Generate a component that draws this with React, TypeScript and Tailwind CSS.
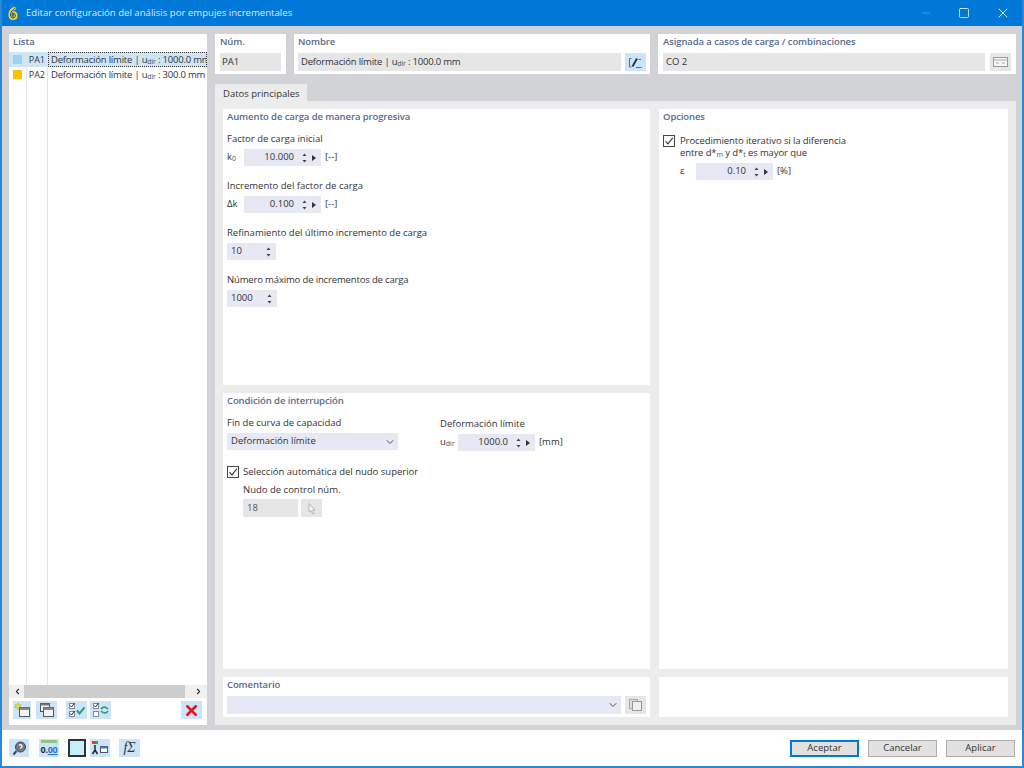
import React from 'react';
import { ChevronDown, ChevronLeft, ChevronRight, Minus, Square, X } from 'lucide-react';

const font = "font-['Open_Sans','Noto_Sans',sans-serif]";

function Sub({ children }: { children: React.ReactNode }) {
  return <span className="text-[7px] relative top-[1px] text-[#555]">{children}</span>;
}

function Heading({ children }: { children: React.ReactNode }) {
  return <div className="text-[9.5px] leading-[14px] font-semibold tracking-[-0.1px] text-[#5a6a8c]">{children}</div>;
}

function Label({ children, className = '' }: { children: React.ReactNode; className?: string }) {
  return <div className={`text-[9.5px] leading-[14px] text-[#333] ${className}`}>{children}</div>;
}

// up/down arrows of a spinner
function Spin() {
  return (
    <svg width="5" height="12" viewBox="0 0 5 12" className="shrink-0">
      <path d="M2.5 1.5L4.5 4H0.5z" fill="#444" />
      <path d="M2.5 10.5L4.5 8H0.5z" fill="#444" />
    </svg>
  );
}

function Play() {
  return (
    <svg width="4" height="6" viewBox="0 0 4 6" className="shrink-0">
      <path d="M0 0L4 3L0 6z" fill="#333" />
    </svg>
  );
}

function SpinField({ value, width, unit }: { value: string; width: string; unit: string }) {
  return (
    <>
      <div className={`h-[17px] ${width} bg-[#e6e8f3] flex items-center justify-end pr-[5px] gap-[5px] text-[9.5px] text-[#333]`}>
        <span className="mr-[3px]">{value}</span>
        <Spin />
        <Play />
      </div>
      <span className="text-[9.5px] text-[#333] ml-[4px]">{unit}</span>
    </>
  );
}

function IntField({ value, width }: { value: string; width: string }) {
  return (
    <div className={`h-[17px] ${width} bg-[#e6e8f3] flex items-center justify-between pl-[4px] pr-[5px] text-[9.5px] text-[#333] mt-[3px]`}>
      <span>{value}</span>
      <Spin />
    </div>
  );
}

function Check() {
  return (
    <div className="w-[12px] h-[12px] border border-[#444] bg-white flex items-center justify-center shrink-0">
      <svg width="10" height="10" viewBox="0 0 10 10">
        <path d="M1.5 5.2L4 7.8L8.8 1.8" fill="none" stroke="#333" strokeWidth="1.1" />
      </svg>
    </div>
  );
}

function ToolBtn({ children, className = 'w-[21px]' }: { children: React.ReactNode; className?: string }) {
  return <div className={`h-[18px] bg-[#cce4f7] flex items-center justify-center shrink-0 ${className}`}>{children}</div>;
}

function WinIcon({ star }: { star?: boolean }) {
  return (
    <svg width="17" height="16" viewBox="0 0 17 16">
      {star ? (
        <path d="M4 1l1 2 2-.5-1 2 1.5 1.500-2.500.2L4 8 3 5.700.5 5.500 2 4 1.200 2.500 3 3z" fill="#e8e020" stroke="#9a9a20" strokeWidth="0.4" />
      ) : (
        <>
          <rect x="2.500" y="1.500" width="9" height="8" fill="#f4f4f4" stroke="#555" />
          <rect x="2.500" y="1.500" width="9" height="2" fill="#777" />
        </>
      )}
      <rect x="5.500" y="5.500" width="10" height="9" fill="#f4f4f4" stroke="#555" />
      <rect x="5.500" y="5.500" width="10" height="2.500" fill="#888" />
    </svg>
  );
}

function CheckRows({ swap }: { swap?: boolean }) {
  return (
    <svg width="18" height="16" viewBox="0 0 18 16">
      <rect x="1.500" y="1.500" width="5" height="5" fill="#fff" stroke="#889" />
      <path d="M2.500 3.500l1 1.500 3-4" fill="none" stroke="#234" strokeWidth="1" />
      <rect x="1.500" y="9.500" width="5" height="5" fill="#fff" stroke="#889" />
      {!swap && <path d="M2.500 11.500l1 1.500 3-4" fill="none" stroke="#234" strokeWidth="1" />}
      {swap ? (
        <path d="M9 7c2-3 5-2 7 0M16 9c-2 3-5 2-7 0" fill="none" stroke="#2f9e7a" strokeWidth="1.600" />
      ) : (
        <path d="M9 8.500l2.500 3 5-6" fill="none" stroke="#2f9e6a" strokeWidth="2" />
      )}
    </svg>
  );
}

function ListPanel() {
  return (
    <div className="w-[198px] shrink-0 bg-white flex flex-col">
      <div className="h-[16px] pl-[4px] pt-[1px] text-[9.5px] leading-[14px] font-semibold text-[#5a6a8c]">Lista</div>
      <div className="flex-1 flex min-h-0 mt-[2px]">
        <div className="w-[18px] shrink-0 border-r border-[#e4e4e4] flex flex-col">
          <div className="h-[15px] flex items-center justify-center bg-[#cde6f7]">
            <div className="w-[9px] h-[9px] bg-[#9ed3ef]" />
          </div>
          <div className="h-[15px] flex items-center justify-center">
            <div className="w-[9px] h-[9px] bg-[#ffc000]" />
          </div>
        </div>
        <div className="w-[21px] shrink-0 border-r border-[#e4e4e4] flex flex-col text-[9px] text-[#333]">
          <div className="h-[15px] leading-[15px] text-right pr-[2px] bg-[#cde6f7]">PA1</div>
          <div className="h-[15px] leading-[15px] text-right pr-[2px]">PA2</div>
        </div>
        <div className="flex-1 min-w-0 flex flex-col text-[9.5px] tracking-[-0.2px] text-[#333] overflow-hidden">
          <div className="h-[15px] leading-[13px] pl-[2px] bg-[#cde6f7] border border-dotted border-[#333] whitespace-nowrap overflow-hidden">
            Deformación límite | u<Sub>dir</Sub> : 1000.0 mm
          </div>
          <div className="h-[15px] leading-[15px] pl-[3px] whitespace-nowrap overflow-hidden">
            Deformación límite | u<Sub>dir</Sub> : 300.0 mm
          </div>
        </div>
      </div>
      <div className="h-[13px] flex items-center bg-[#f0f0f0] text-[#333]">
        <div className="w-[15px] pl-[4px] flex justify-start"><ChevronLeft size={9} strokeWidth={3} /></div>
        <div className="w-[161px] h-full bg-[#cdcdcd]" />
        <div className="flex-1 pr-[4px] flex justify-end"><ChevronRight size={9} strokeWidth={3} /></div>
      </div>
      <div className="h-[27px] pl-[4px] pr-[5px] flex items-center pb-[4px] pt-[1px]">
        <ToolBtn className="w-[18px]"><WinIcon star /></ToolBtn>
        <ToolBtn className="w-[21px] ml-[5px]"><WinIcon /></ToolBtn>
        <ToolBtn className="w-[21px] ml-[9px]"><CheckRows /></ToolBtn>
        <ToolBtn className="w-[21px] ml-[3px]"><CheckRows swap /></ToolBtn>
        <ToolBtn className="w-[21px] ml-auto"><X size={17} strokeWidth={3.500} className="text-[#e81123]" /></ToolBtn>
      </div>
    </div>
  );
}

function TopFields() {
  return (
    <div className="flex gap-[8px] h-[40px] shrink-0">
      <div className="w-[71px] bg-white px-[5px] pt-[1px] flex flex-col">
        <Heading>Núm.</Heading>
        <div className="mt-[4px] h-[18px] bg-[#e6e6e6] pl-[2px] text-[9.5px] leading-[18px] text-[#333]">PA1</div>
      </div>
      <div className="w-[356px] bg-white px-[4px] pt-[1px] flex flex-col">
        <Heading>Nombre</Heading>
        <div className="mt-[4px] flex gap-[4px]">
          <div className="flex-1 h-[18px] bg-[#e6e6e6] pl-[3px] text-[9.5px] tracking-[-0.2px] leading-[18px] text-[#333]">
            Deformación límite | u<Sub>dir</Sub> : 1000.0 mm
          </div>
          <div className="w-[21px] h-[18px] bg-[#cce4f7] flex items-center justify-center">
            <svg width="15" height="13" viewBox="0 0 15 13">
              <path d="M3.500 2.500H1.500v8.500H3.500" fill="none" stroke="#667" />
              <path d="M4.500 10.500L9 2.500" stroke="#234" strokeWidth="1.800" />
              <path d="M8 11.500h5.500M10.500 3.500h2.500" stroke="#667" />
            </svg>
          </div>
        </div>
      </div>
      <div className="flex-1 bg-white px-[5px] pt-[1px] flex flex-col">
        <Heading>Asignada a casos de carga / combinaciones</Heading>
        <div className="mt-[4px] flex gap-[5px]">
          <div className="flex-1 h-[18px] bg-[#e6e6e6] pl-[3px] text-[9.5px] leading-[18px] text-[#333]">CO 2</div>
          <div className="w-[21px] h-[18px] bg-[#e6e6e6] flex items-center justify-center">
            <svg width="15" height="10" viewBox="0 0 15 10">
              <rect x="0.500" y="0.500" width="14" height="9" fill="#f6f6f6" stroke="#999" />
              <path d="M0.500 3h14M3 6h3M9 6h3" stroke="#aaa" />
            </svg>
          </div>
        </div>
      </div>
    </div>
  );
}

function LoadPanel() {
  return (
    <div className="flex-1 bg-white px-[4px] pt-[1px] min-h-0">
      <Heading>Aumento de carga de manera progresiva</Heading>
      <Label className="mt-[8px]">Factor de carga inicial</Label>
      <div className="flex items-center mt-[3px]">
        <span className="w-[17px] text-[9.5px] text-[#333]">k<Sub>0</Sub></span>
        <SpinField value="10.000" width="w-[77px]" unit="[--]" />
      </div>
      <Label className="mt-[13px]">Incremento del factor de carga</Label>
      <div className="flex items-center mt-[3px]">
        <span className="w-[17px] text-[9.5px] text-[#333]">Δk</span>
        <SpinField value="0.100" width="w-[77px]" unit="[--]" />
      </div>
      <Label className="mt-[13px]">Refinamiento del último incremento de carga</Label>
      <IntField value="10" width="w-[49px]" />
      <Label className="mt-[13px] tracking-[-0.15px]">Número máximo de incrementos de carga</Label>
      <IntField value="1000" width="w-[50px]" />
    </div>
  );
}

function StopPanel() {
  return (
    <div className="flex-1 bg-white px-[4px] pt-[1px] min-h-0">
      <Heading>Condición de interrupción</Heading>
      <div className="flex mt-[8px]">
        <div className="w-[213px]">
          <Label>Fin de curva de capacidad</Label>
          <div className="mt-[3px] w-[171px] h-[17px] bg-[#e6e8f3] flex items-center justify-between pl-[4px] pr-[1px] text-[9.5px] text-[#333]">
            <span>Deformación límite</span>
            <ChevronDown size={12} className="text-[#555] mr-[1px]" />
          </div>
        </div>
        <div>
          <Label className="mt-[1px]">Deformación límite</Label>
          <div className="flex items-center mt-[3px]">
            <span className="w-[18px] text-[9.5px] text-[#333]">u<Sub>dir</Sub></span>
            <SpinField value="1000.0" width="w-[77px]" unit="[mm]" />
          </div>
        </div>
      </div>
      <div className="flex items-center gap-[4px] mt-[14px]">
        <Check />
        <Label>Selección automática del nudo superior</Label>
      </div>
      <div className="pl-[16px]">
        <Label className="mt-[4px]">Nudo de control núm.</Label>
        <div className="flex gap-[3px] mt-[2px]">
          <div className="w-[55px] h-[18px] bg-[#e6e6e6] pl-[4px] text-[9.5px] leading-[18px] text-[#555]">18</div>
          <div className="w-[21px] h-[18px] bg-[#e6e6e6] flex items-center justify-center">
            <svg width="12" height="13" viewBox="0 0 12 13">
              <path d="M3 1.500L9 8H6.500L8 11.500 6.500 12 5 8.500 3 10z" fill="#f4f4f4" stroke="#aaa" strokeWidth="0.800" />
            </svg>
          </div>
        </div>
      </div>
    </div>
  );
}

function CommentPanel() {
  return (
    <div className="h-[40px] shrink-0 bg-white px-[4px] pt-[1px]">
      <Heading>Comentario</Heading>
      <div className="flex gap-[4px] mt-[4px]">
        <div className="flex-1 h-[18px] bg-[#e6e8f3] flex items-center justify-end pr-[2px]">
          <ChevronDown size={12} className="text-[#555]" />
        </div>
        <div className="w-[21px] h-[18px] bg-[#e6e6e6] flex items-center justify-center">
          <svg width="15" height="14" viewBox="0 0 15 14">
            <rect x="1.500" y="1.500" width="8" height="9" fill="#ddd" stroke="#aaa" />
            <rect x="4.500" y="3.500" width="9" height="9" fill="#eee" stroke="#999" />
          </svg>
        </div>
      </div>
    </div>
  );
}

function OptionsPanel() {
  return (
    <div className="flex-1 bg-white px-[4px] pt-[1px]">
      <Heading>Opciones</Heading>
      <div className="flex gap-[5px] mt-[9px]">
        <div className="mt-[2px]"><Check /></div>
        <div className="text-[9.5px] leading-[12px] tracking-[-0.1px] text-[#333] pt-[2px]">
          Procedimiento iterativo si la diferencia<br />
          entre d*<Sub>m</Sub> y d*<Sub>t</Sub> es mayor que
        </div>
      </div>
      <div className="flex items-center mt-[3px] ml-[17px]">
        <span className="w-[16px] text-[9.5px] text-[#333]">ε</span>
        <SpinField value="0.10" width="w-[77px]" unit="[%]" />
      </div>
    </div>
  );
}

function FooterBtn({ children, primary }: { children: React.ReactNode; primary?: boolean }) {
  return (
    <div
      className={`w-[69px] h-[17px] bg-[#e1e1e1] text-[9.5px] leading-[14px] text-[#333] flex items-center justify-center border ${
        primary ? 'border-2 border-[#0078d7]' : 'border-[#adadad]'
      }`}
    >
      {children}
    </div>
  );
}

export default function App() {
  return (
    <div className={`w-[1024px] h-[768px] overflow-hidden flex flex-col bg-white border-x-2 border-b-2 border-[#2b88d8] ${font}`}>
      {/* title bar */}
      <div className="h-[26px] -mx-[2px] shrink-0 bg-[#0078d7] flex items-center text-white">
        <svg width="14" height="16" viewBox="0 0 14 16" className="ml-[6px]">
          <path d="M9.500 3C6 4 4 7 4 10c0 2.500 1.500 3.500 3 3.500s3-1 3-3-1.500-3-3-2.500" fill="none" stroke="#f6d23c" strokeWidth="3.200" />
          <path d="M9 3.500C6.500 4.500 4.500 7 4.500 10c0 2 1.200 3 2.500 3s2.500-1 2.500-2.500S8.200 8 7 8.500" fill="none" stroke="#5a4a10" strokeWidth="1" />
        </svg>
        <span className="ml-[6px] text-[9.600px] text-[#dbeaf7]">Editar configuración del análisis por empujes incrementales</span>
        <div className="ml-auto flex items-center">
          <Minus size={12} className="text-[#3d9be4] mr-[26px]" />
          <Square size={12} strokeWidth={1.500} className="mr-[25px]" />
          <X size={16} strokeWidth={1.300} className="mr-[13px]" />
        </div>
      </div>

      {/* body */}
      <div className="h-[704px] shrink-0 bg-[#d2d3d6] flex gap-[8px] pl-[7px] pr-[6px] pt-[8px] pb-[5px]">
        <ListPanel />
        <div className="flex-1 min-w-0 flex flex-col">
          <TopFields />
          <div className="mt-[10px] h-[17px] w-[92px] shrink-0 bg-[#ececec] pl-[8px] text-[9.5px] leading-[20px] text-[#333]">Datos principales</div>
          <div className="flex-1 min-h-0 bg-[#ececec] p-[8px] flex gap-[9px]">
            <div className="w-[427px] shrink-0 flex flex-col gap-[8px]">
              <LoadPanel />
              <StopPanel />
              <CommentPanel />
            </div>
            <div className="flex-1 flex flex-col gap-[8px]">
              <OptionsPanel />
              <div className="h-[40px] shrink-0 bg-white" />
            </div>
          </div>
        </div>
      </div>

      {/* footer */}
      <div className="flex-1 flex items-center pl-[7px] pr-[7px] relative">
        <ToolBtn className="w-[20px]">
          <svg width="15" height="15" viewBox="0 0 15 15">
            <circle cx="8.500" cy="6" r="5" fill="#6f7b85" stroke="#445" />
            <path d="M4.500 10L1.500 13.500" stroke="#445" strokeWidth="2" />
            <path d="M7 4.500c1-1.500 3.500-.5 3 1-.3 1-1.500 1-1.500 2" fill="none" stroke="#fff" strokeWidth="1.200" />
          </svg>
        </ToolBtn>
        <div className="ml-[10px] w-[20px] h-[18px] bg-[#cce4f7] flex flex-col items-center shrink-0">
          <div className="w-[16px] h-[3px] bg-[#8cc68a] mt-[1px]" />
          <div className="text-[9px] leading-[13px] font-bold text-[#234] tracking-[-0.3px]">
            0.<span className="text-[#2b6fd0] underline">00</span>
          </div>
        </div>
        <div className="ml-[9px] w-[18px] h-[18px] border-2 border-[#333] bg-[#c5f0fb]" />
        <ToolBtn className="w-[20px] ml-[4px]">
          <svg width="18" height="17" viewBox="0 0 18 17">
            <rect x="1" y="1" width="3" height="3" fill="#e03b2f" />
            <rect x="4" y="1" width="3" height="3" fill="#3a9e4a" />
            <path d="M4 5v5M1.500 14L4 10l2.500 4" fill="none" stroke="#222" strokeWidth="1.500" />
            <rect x="9.500" y="6.500" width="7" height="6" fill="#fff" stroke="#556" />
            <rect x="9.500" y="6.500" width="7" height="2" fill="#3a7ac8" />
          </svg>
        </ToolBtn>
        <ToolBtn className="w-[21px] ml-[9px]">
          <span className="font-['Liberation_Serif',serif] italic text-[14px] leading-none text-[#334]">fΣ</span>
        </ToolBtn>
        <div className="ml-auto flex gap-[9px]">
          <FooterBtn primary>Aceptar</FooterBtn>
          <FooterBtn>Cancelar</FooterBtn>
          <FooterBtn>Aplicar</FooterBtn>
        </div>
      </div>
    </div>
  );
}
